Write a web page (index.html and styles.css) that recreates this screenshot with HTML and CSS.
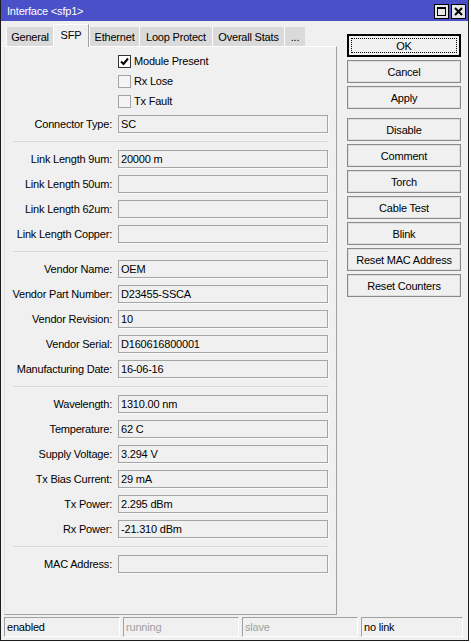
FILE: index.html
```html
<!DOCTYPE html>
<html>
<head>
<meta charset="utf-8">
<link rel="stylesheet" href="styles.css">
</head>
<body>
<div class="window">
  <div class="titlebar">
    <span class="title">Interface &lt;sfp1&gt;</span>
    <div class="tb-btns">
      <span class="tb-btn"><svg width="11" height="11" viewBox="0 0 11 11"><rect x="1.5" y="1.5" width="8" height="8" fill="none" stroke="#000" stroke-width="1"/><rect x="1" y="1" width="9" height="2" fill="#000"/></svg></span>
      <span class="tb-btn"><svg width="11" height="11" viewBox="0 0 11 11"><path d="M2 2 L9 9 M9 2 L2 9" stroke="#000" stroke-width="2"/></svg></span>
    </div>
  </div>
  <div class="main">
    <div class="left">
      <div class="tabs">
        <div class="tab w-general">General</div>
        <div class="tab active w-sfp">SFP</div>
        <div class="tab w-eth">Ethernet</div>
        <div class="tab w-loop">Loop Protect</div>
        <div class="tab w-stats">Overall Stats</div>
        <div class="tab w-more">...</div>
      </div>
      <div class="panel">
        <div class="checks">
          <div class="check-row"><span class="cb checked"><svg width="11" height="11" viewBox="0 0 11 11"><path d="M2 5.5 L4.5 8 L9 2.5" fill="none" stroke="#000" stroke-width="2"/></svg></span><span>Module Present</span></div>
          <div class="check-row"><span class="cb"></span><span>Rx Lose</span></div>
          <div class="check-row"><span class="cb"></span><span>Tx Fault</span></div>
        </div>
        <div class="section first">
          <div class="row"><span class="lbl">Connector Type:</span><div class="field">SC</div></div>
        </div>
        <div class="sep"></div>
        <div class="section">
          <div class="row"><span class="lbl">Link Length 9um:</span><div class="field">20000 m</div></div>
          <div class="row"><span class="lbl">Link Length 50um:</span><div class="field"></div></div>
          <div class="row"><span class="lbl">Link Length 62um:</span><div class="field"></div></div>
          <div class="row"><span class="lbl">Link Length Copper:</span><div class="field"></div></div>
        </div>
        <div class="sep"></div>
        <div class="section">
          <div class="row"><span class="lbl">Vendor Name:</span><div class="field">OEM</div></div>
          <div class="row"><span class="lbl">Vendor Part Number:</span><div class="field">D23455-SSCA</div></div>
          <div class="row"><span class="lbl">Vendor Revision:</span><div class="field">10</div></div>
          <div class="row"><span class="lbl">Vendor Serial:</span><div class="field">D160616800001</div></div>
          <div class="row"><span class="lbl">Manufacturing Date:</span><div class="field">16-06-16</div></div>
        </div>
        <div class="sep"></div>
        <div class="section">
          <div class="row"><span class="lbl">Wavelength:</span><div class="field">1310.00 nm</div></div>
          <div class="row"><span class="lbl">Temperature:</span><div class="field">62 C</div></div>
          <div class="row"><span class="lbl">Supply Voltage:</span><div class="field">3.294 V</div></div>
          <div class="row"><span class="lbl">Tx Bias Current:</span><div class="field">29 mA</div></div>
          <div class="row"><span class="lbl">Tx Power:</span><div class="field">2.295 dBm</div></div>
          <div class="row"><span class="lbl">Rx Power:</span><div class="field">-21.310 dBm</div></div>
        </div>
        <div class="sep"></div>
        <div class="section">
          <div class="row"><span class="lbl">MAC Address:</span><div class="field"></div></div>
        </div>
      </div>
    </div>
    <div class="buttons">
      <div class="btn default">OK</div>
      <div class="btn">Cancel</div>
      <div class="btn">Apply</div>
      <div class="btn spaced">Disable</div>
      <div class="btn">Comment</div>
      <div class="btn">Torch</div>
      <div class="btn">Cable Test</div>
      <div class="btn">Blink</div>
      <div class="btn">Reset MAC Address</div>
      <div class="btn">Reset Counters</div>
    </div>
  </div>
  <div class="status">
    <div class="cell c1">enabled</div>
    <div class="cell c2 dim">running</div>
    <div class="cell c3 dim">slave</div>
    <div class="cell c4">no link</div>
  </div>
</div>
</body>
</html>
```

FILE: styles.css
```css
body {
  margin: 0;
  background: #ffffff;
  font-family: "Liberation Sans", Arial, sans-serif;
  font-size: 11px;
  letter-spacing: -0.2px;
  color: #000;
}

.window {
  width: 467px;
  height: 640px;
  border: 1px solid #1c1c1c;
  border-top: none;
  background: #f0f0f0;
  display: flex;
  flex-direction: column;
}

.titlebar {
  height: 21px;
  background: #4a50c8;
  color: #fff;
  display: flex;
  align-items: center;
  justify-content: space-between;
  padding: 0 2px 0 6px;
  font-size: 11px;
}

.tb-btns {
  display: flex;
  gap: 2px;
  margin-top: 1px;
}

.tb-btn {
  width: 15px;
  height: 15px;
  box-sizing: border-box;
  border: 1px solid #000;
  background: #e6e6e6;
  display: flex;
  align-items: center;
  justify-content: center;
}

.main {
  display: flex;
  padding-left: 3px;
  height: 594px;
}

.left {
  width: 333px;
  display: flex;
  flex-direction: column;
}

.tabs {
  height: 25px;
  display: flex;
  align-items: flex-end;
  padding-left: 2px;
  position: relative;
  z-index: 2;
}

.tab {
  height: 19px;
  box-sizing: border-box;
  background: #dadada;
  border-left: 1px solid #fbfbfb;
  display: flex;
  align-items: center;
  justify-content: center;
  padding-top: 1px;
}

.tab.active {
  height: 23px;
  margin-bottom: -1px;
  background: #f0f0f0;
  border-top: 1px solid #fff;
  border-left: 1px solid #fff;
  border-right: 1px solid #a0a0a0;
  padding-top: 0;
  padding-bottom: 3px;
}

.w-general { width: 47px; }
.w-sfp { width: 36px; }
.w-eth { width: 50px; }
.w-loop { width: 73px; }
.w-stats { width: 72px; }
.w-more { width: 21px; }

.panel {
  height: 569px;
  box-sizing: border-box;
  border: 1px solid;
  border-color: #ffffff #a0a0a0 #a0a0a0 #e3e3e3;
  padding-top: 4px;
}

.check-row {
  height: 20px;
  display: flex;
  align-items: center;
  padding-left: 113px;
}

.cb {
  width: 13px;
  height: 13px;
  box-sizing: border-box;
  border: 1px solid #a3a3a3;
  background: #f4f4f4;
  margin-right: 3px;
  display: flex;
  align-items: center;
  justify-content: center;
}

.cb.checked {
  border-color: #333;
  background: #fff;
}

.section.first {
  margin-top: 4px;
}

.row {
  height: 18px;
  display: flex;
  align-items: center;
}

.row + .row {
  margin-top: 7px;
}

.lbl {
  width: 107px;
  text-align: right;
  white-space: nowrap;
}

.field {
  margin-left: 6px;
  width: 210px;
  height: 18px;
  box-sizing: border-box;
  border: 1px solid #a5a5a5;
  box-shadow: 1px 1px 0 #fafafa;
  background: #f0f0f0;
  padding: 0 2px;
  line-height: 16px;
  white-space: nowrap;
}

.sep {
  width: 315px;
  height: 1px;
  margin: 8px 0 8px 8px;
  background: #d9d9d9;
}

.buttons {
  margin-left: 10px;
  width: 114px;
  padding-top: 13px;
  display: flex;
  flex-direction: column;
  gap: 3px;
}

.btn {
  height: 23px;
  box-sizing: border-box;
  border: 1px solid #8a8a8a;
  box-shadow: inset 0 0 0 1px #dedede;
  background: #f0f0f0;
  display: flex;
  align-items: center;
  justify-content: center;
  white-space: nowrap;
}

.btn.default {
  border-color: #000;
  box-shadow: inset 0 0 0 1px #000;
  position: relative;
}

.btn.default::after {
  content: "";
  position: absolute;
  left: 3px;
  top: 3px;
  right: 3px;
  bottom: 3px;
  border: 1px dotted #000;
}

.btn.spaced {
  margin-top: 6px;
}

.status {
  display: flex;
  gap: 3px;
  padding-left: 3px;
  margin-top: 2px;
  height: 20px;
}

.cell {
  height: 20px;
  box-sizing: border-box;
  border: 1px solid;
  border-color: #a0a0a0 #ffffff #ffffff #a0a0a0;
  padding-left: 2px;
  line-height: 18px;
}

.c1, .c2, .c3 { width: 116px; }
.c4 { width: 102px; }

.dim {
  color: #a0a0a0;
}
```
